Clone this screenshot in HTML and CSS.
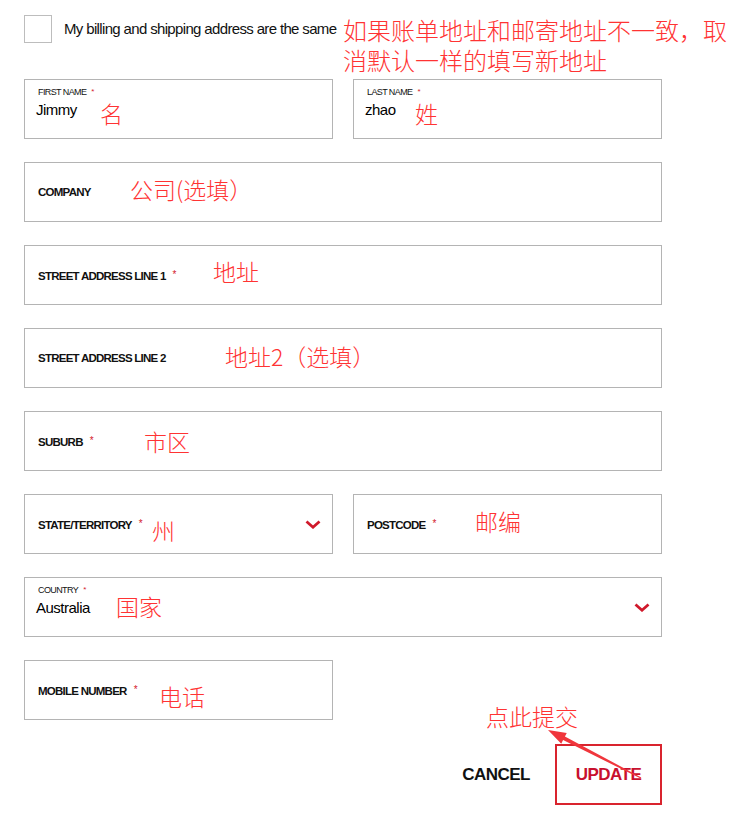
FILE: index.html
```html
<!DOCTYPE html>
<html lang="en">
<head>
<meta charset="utf-8">
<title>Billing address</title>
<link rel="stylesheet" href="styles.css">
</head>
<body>
<div class="page">
  <div class="top">
    <span class="checkbox"></span>
    <span class="check-label">My billing and shipping address are the same</span>
    <p class="top-note">如果账单地址和邮寄地址不一致，取消默认一样的填写新地址</p>
  </div>

  <div class="grid">
    <div class="field">
      <div class="stack">
        <div class="mini">FIRST NAME<span class="req">*</span></div>
        <div class="value">Jimmy</div>
      </div>
      <span class="note n-first">名</span>
    </div>
    <div class="field">
      <div class="stack">
        <div class="mini">LAST NAME<span class="req">*</span></div>
        <div class="value">zhao</div>
      </div>
      <span class="note n-last">姓</span>
    </div>

    <div class="field wide">
      <span class="label">COMPANY</span>
      <span class="note n-company">公司(选填）</span>
    </div>

    <div class="field wide">
      <span class="label">STREET ADDRESS LINE 1<span class="req">*</span></span>
      <span class="note n-street1">地址</span>
    </div>

    <div class="field wide">
      <span class="label">STREET ADDRESS LINE 2</span>
      <span class="note n-street2">地址2（选填）</span>
    </div>

    <div class="field wide">
      <span class="label">SUBURB<span class="req">*</span></span>
      <span class="note n-suburb">市区</span>
    </div>

    <div class="field">
      <span class="label">STATE/TERRITORY<span class="req">*</span></span>
      <svg class="chev" viewBox="0 0 16 9"><polyline points="1.5,1.5 8,7.2 14.5,1.5" fill="none" stroke="#d0192b" stroke-width="2.8"/></svg>
      <span class="note n-state">州</span>
    </div>
    <div class="field">
      <span class="label">POSTCODE<span class="req">*</span></span>
      <span class="note n-post">邮编</span>
    </div>

    <div class="field wide">
      <div class="stack">
        <div class="mini">COUNTRY<span class="req">*</span></div>
        <div class="value">Australia</div>
      </div>
      <svg class="chev" viewBox="0 0 16 9"><polyline points="1.5,1.5 8,7.2 14.5,1.5" fill="none" stroke="#d0192b" stroke-width="2.8"/></svg>
      <span class="note n-country">国家</span>
    </div>

    <div class="field">
      <span class="label">MOBILE NUMBER<span class="req">*</span></span>
      <span class="note n-mobile">电话</span>
    </div>
  </div>

  <div class="actions">
    <span class="note n-submit">点此提交</span>
    <button class="btn cancel" type="button">CANCEL</button>
    <button class="btn update" type="button">UPDATE</button>
    <svg class="arrow" viewBox="0 0 130 60">
      <polygon points="24,6 42.75,8.97 40.92,12.52 117.28,53.47 116.72,54.53 39.08,16.08 37.25,19.63" fill="#f0363c"/>
    </svg>
  </div>
</div>
</body>
</html>
```

FILE: styles.css
```css
body {
  margin: 0;
  background: #ffffff;
  color: #111111;
  font-family: "Liberation Sans", Arial, sans-serif;
}

.page {
  padding: 15px 0 0 24px;
}

.top {
  display: flex;
  align-items: flex-start;
}

.checkbox {
  flex: none;
  width: 28px;
  height: 28px;
  box-sizing: border-box;
  border: 1px solid #bdbdbd;
}

.check-label {
  flex: 0 0 279px;
  min-width: 0;
  margin-left: 12px;
  font-size: 15px;
  letter-spacing: -0.65px;
  line-height: 28px;
  white-space: nowrap;
  color: #111111;
}

.top-note {
  margin: 0;
  width: 392px;
  font-family: "Noto Sans CJK SC", sans-serif;
  font-weight: 300;
  font-size: 24px;
  line-height: 30px;
  color: #ff3333;
}

.grid {
  display: grid;
  grid-template-columns: 1fr 1fr;
  column-gap: 20px;
  row-gap: 23px;
  width: 638px;
  margin-top: 4px;
}

.field {
  position: relative;
  display: flex;
  align-items: center;
  height: 60px;
  box-sizing: border-box;
  border: 1px solid #b4b4b4;
  padding: 0 11px 0 13px;
}

.wide {
  grid-column: 1 / -1;
}

.label {
  font-size: 11.5px;
  font-weight: 700;
  letter-spacing: -0.75px;
  line-height: 16px;
  white-space: nowrap;
}

.req {
  color: #d4202c;
  font-weight: 400;
  font-size: 10px;
  letter-spacing: 0;
  margin-left: 7px;
  vertical-align: 2px;
}

.stack {
  align-self: flex-start;
  padding-top: 7px;
  margin-left: -2px;
}

.mini {
  font-size: 9px;
  letter-spacing: -0.6px;
  line-height: 11px;
  margin-left: 2px;
  white-space: nowrap;
}

.mini .req {
  font-size: 8px;
  line-height: 8px;
  margin-left: 5px;
  vertical-align: 1px;
}

.value {
  font-size: 15px;
  letter-spacing: -0.5px;
  line-height: 20px;
  margin-top: 2px;
  color: #000000;
}

.chev {
  flex: none;
  width: 16px;
  height: 9px;
  margin-left: auto;
}

.note {
  position: absolute;
  font-family: "Noto Sans CJK SC", sans-serif;
  font-weight: 300;
  font-size: 23px;
  line-height: 23px;
  color: #ff3333;
  white-space: nowrap;
}

.n-first { left: 75px; top: 22px; }
.n-last { left: 61px; top: 22px; }
.n-company { left: 105px; top: 15px; }
.n-street1 { left: 188px; top: 14px; }
.n-street2 { left: 200px; top: 16px; }
.n-suburb { left: 119px; top: 18px; }
.n-state { left: 127px; top: 24px; }
.n-post { left: 121px; top: 15px; }
.n-country { left: 91px; top: 17px; }
.n-mobile { left: 134px; top: 24px; }

.actions {
  position: relative;
  display: flex;
  justify-content: flex-end;
  align-items: center;
  width: 638px;
  margin-top: 24px;
}

.n-submit {
  left: 462px;
  top: -39px;
}

.btn {
  background: none;
  border: none;
  padding: 0;
  font-family: "Liberation Sans", Arial, sans-serif;
  font-weight: 700;
  font-size: 17px;
  letter-spacing: -0.5px;
  cursor: pointer;
}

.cancel {
  color: #111111;
  margin-right: 25px;
}

.update {
  width: 107px;
  height: 61px;
  box-sizing: border-box;
  border: 2px solid #d9242e;
  color: #c8102e;
}

.arrow {
  position: absolute;
  left: 500px;
  top: -20px;
  width: 130px;
  height: 60px;
  overflow: visible;
}
```
